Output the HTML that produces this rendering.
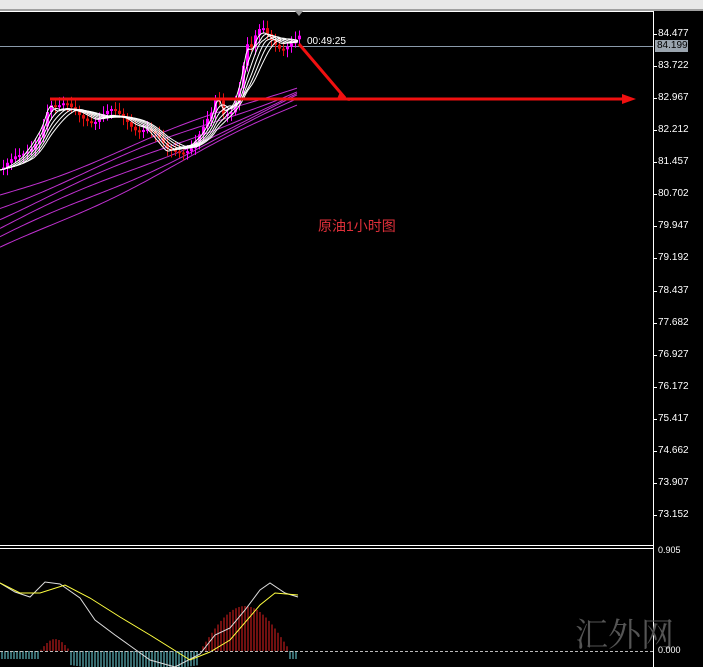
<!DOCTYPE html>
<html><head><meta charset="utf-8"><style>
body{margin:0;width:703px;height:667px;background:#000;overflow:hidden;font-family:"Liberation Sans",sans-serif}
.ax{position:absolute;left:658px;font-size:10px;color:#fff;font-family:"Liberation Sans",sans-serif}
</style></head><body>
<div style="position:absolute;left:0;top:0;width:703px;height:9px;background:#e8e8e8"></div>
<div style="position:absolute;left:0;top:9px;width:703px;height:2px;background:#a0a0a0"></div>
<svg id="s" width="703" height="667" style="position:absolute;left:0;top:0" xmlns="http://www.w3.org/2000/svg">
<rect x="0" y="11" width="703" height="656" fill="#000"/>
<line x1="0" y1="11.5" x2="653" y2="11.5" stroke="#fff"/>
<line x1="653.5" y1="11" x2="653.5" y2="667" stroke="#fff"/>
<line x1="0" y1="545.5" x2="653" y2="545.5" stroke="#fff"/>
<line x1="0" y1="548.5" x2="653" y2="548.5" stroke="#fff"/>
<line x1="0" y1="46.5" x2="653" y2="46.5" stroke="#8a9aaa"/>
<polygon points="295,11 303,11 299,16" fill="#999"/>
<g id="g"></g>
<line x1="0" y1="651.5" x2="653" y2="651.5" stroke="#bbb" stroke-dasharray="3,2"/>
<line x1="50" y1="99" x2="628" y2="99" stroke="#f01010" stroke-width="3"/>
<polygon points="622,94 636,99 622,104" fill="#f01010"/>
<polyline points="299,44 345,98" stroke="#f01010" stroke-width="3" fill="none"/>
<polygon points="340,92 350,101 337,99" fill="#f01010"/>
<text x="307" y="44" fill="#fff" font-size="10" font-family="Liberation Sans">00:49:25</text>
<text x="318" y="231" fill="#e0303a" font-size="14" font-family="Liberation Sans,Noto Sans CJK SC,sans-serif">原油1小时图</text>
<text x="575" y="646" fill="#555" font-size="33" font-family="Noto Serif CJK SC,serif">汇外网</text>
</svg>
<div id="ax"></div>
<div style="position:absolute;left:655px;top:40px;width:33px;height:12px;background:#9aa4ae"></div>
<div class="ax" style="top:40px;color:#000;left:657px">84.199</div>
<div class="ax" style="top:545px;font-size:9px">0.905</div>
<div class="ax" style="top:645px;font-size:9px">0.000</div>
<script>
var ax=document.getElementById('ax'),h='';
var L=[84.477,83.722,82.967,82.212,81.457,80.702,79.947,79.192,78.437,77.682,76.927,76.172,75.417,74.662,73.907,73.152];
L.forEach(function(v,i){var y=28+i*32.07;h+='<div class="ax" style="top:'+y+'px">'+v.toFixed(3)+'</div><div style="position:absolute;left:653px;top:'+(y+6)+'px;width:4px;height:1px;background:#fff"></div>'});
ax.innerHTML=h;
var P=[[0,170],[10,165],[20,158],[30,145],[40,128],[48,104],[55,112],[65,108],[80,112],[95,120],[110,115],[125,118],[135,125],[145,128],[155,140],[165,152],[175,148],[190,145],[200,135],[210,118],[216,96],[222,112],[232,105],[240,78],[245,45],[250,52],[256,36],[262,32],[270,38],[280,44],[290,42],[298,40]];
function f(x){for(var i=1;i<P.length;i++)if(x<=P[i][0]){var a=P[i-1],b=P[i],t=(x-a[0])/(b[0]-a[0]);return a[1]+t*(b[1]-a[1]);}return 40;}
var s='';
for(var i=0;i<6;i++){var pts=[];for(var x=0;x<=298;x+=3){var y0=195+i*11;var y1=85+i*4;var yy=y0-(x/298)*(y0-y1)+Math.sin(x/40+i)*3;pts.push(x+','+yy);}s+='<polyline points="'+pts.join(' ')+'" fill="none" stroke="#c030d0" stroke-width="1"/>';}
var prev=f(0);
for(var x=2;x<=298;x+=4){var c=f(x)+Math.sin(x*1.7)*6,o=prev;var up=c<o;var col=up?'#ff00ff':'#e01010';if(x%12==0)col=up?'#e01010':'#ff40ff';
var t=Math.min(o,c)-3-Math.abs(Math.sin(x))*5,b=Math.max(o,c)+3+Math.abs(Math.cos(x))*5;
s+='<line x1="'+(x+1.5)+'" y1="'+t+'" x2="'+(x+1.5)+'" y2="'+b+'" stroke="'+col+'"/><rect x="'+x+'" y="'+Math.min(o,c)+'" width="3" height="'+Math.max(2,Math.abs(c-o))+'" fill="'+col+'"/>';prev=c;}
function ma(n,off,col,w){var pts=[],buf=[];for(var x=0;x<=298;x+=2){buf.push(f(x));if(buf.length>n)buf.shift();var m=buf.reduce(function(a,b){return a+b},0)/buf.length;pts.push(x+','+(m+off));}return '<polyline points="'+pts.join(' ')+'" fill="none" stroke="'+col+'" stroke-width="'+w+'"/>';}
for(var i=0;i<6;i++)s+=ma(3+i*3,0,'#fff',1);
var zy=651;
for(var x=2;x<=298;x+=3){var hv;
if(x<40)hv=-8;else if(x<70)hv=12*Math.sin((x-40)/30*Math.PI);else if(x<200)hv=-14-Math.sin((x-70)/130*Math.PI)*6;else if(x<290)hv=45*Math.sin((x-200)/90*Math.PI);else hv=-8;
s+='<line x1="'+x+'" y1="'+zy+'" x2="'+x+'" y2="'+(zy-hv)+'" stroke="'+(hv>0?'#e02020':'#70d8e0')+'"/>';}
var Y=[[0,583],[20,593],[40,593],[65,585],[90,598],[120,617],[150,635],[190,660],[210,652],[230,640],[260,605],[275,593],[298,595]];
var W=[[0,583],[15,592],[30,597],[45,582],[60,584],[80,598],[95,620],[115,635],[150,660],[175,667],[200,654],[215,635],[230,628],[245,610],[260,590],[270,583],[285,593],[298,597]];
function pl(a,c){return '<polyline points="'+a.map(function(p){return p.join(',')}).join(' ')+'" fill="none" stroke="'+c+'"/>';}
s+=pl(W,'#ddd')+pl(Y,'#ffff40');
document.getElementById('g').innerHTML=s;
</script>
</body></html>
